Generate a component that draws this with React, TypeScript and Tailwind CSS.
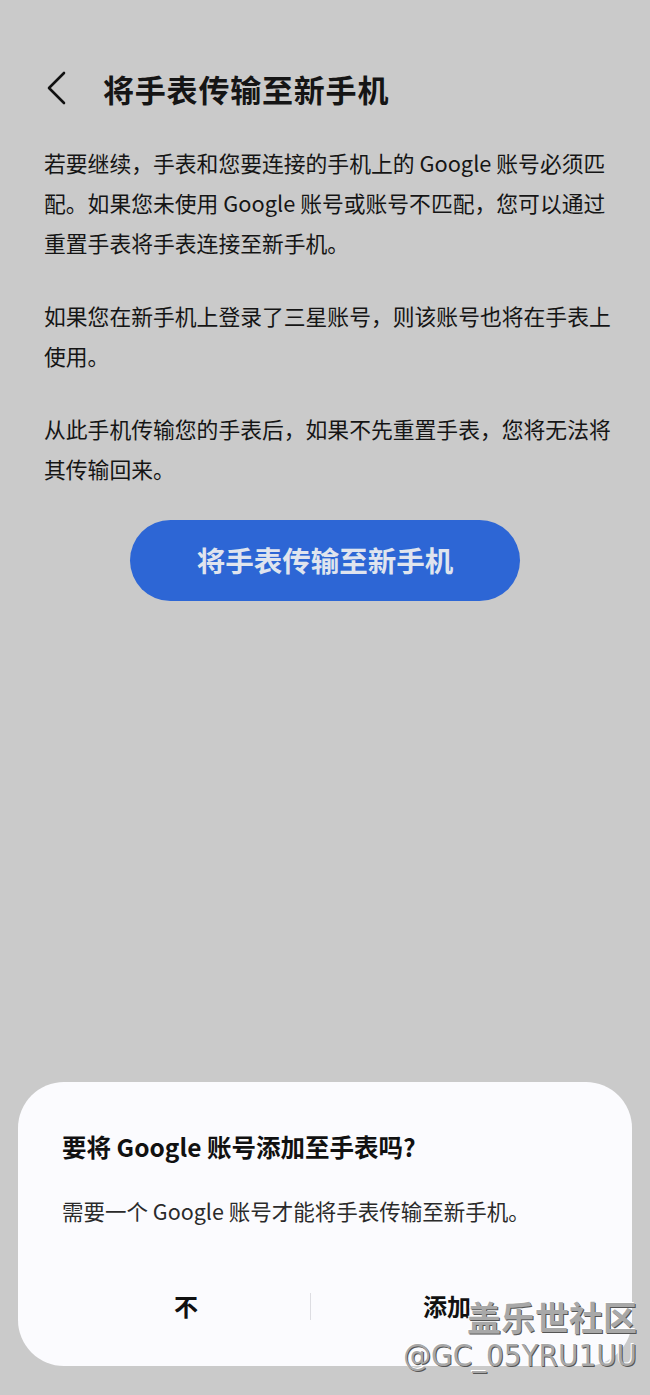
import React from "react";

const cjk = { fontFamily: '"Noto Sans CJK SC", "Noto Sans", sans-serif' };

export default function App() {
  return (
    <div
      className="relative flex min-h-[1395px] w-[650px] flex-col overflow-hidden bg-[#cacaca] text-[#151515]"
      style={cjk}
    >
      {/* Header */}
      <div className="mt-[56px] flex h-[64px] items-center">
        <svg className="ml-[44px] h-[36px] w-[24px]" viewBox="0 0 24 36" fill="none">
          <polyline points="20,3 5,18 20,33" stroke="#111" strokeWidth="2.6" strokeLinecap="round" strokeLinejoin="round" />
        </svg>
        <h1 className="ml-[35px] text-[31px] font-bold leading-none tracking-[0.8px]">将手表传输至新手机</h1>
      </div>

      {/* Body */}
      <div className="mt-[23px] flex flex-col gap-[33px] pl-[44px] text-[21.8px] leading-[40px] whitespace-nowrap">
        <p>
          若要继续，手表和您要连接的手机上的 Google 账号必须匹
          <br />
          配。如果您未使用 Google 账号或账号不匹配，您可以通过
          <br />
          重置手表将手表连接至新手机。
        </p>
        <p>
          如果您在新手机上登录了三星账号，则该账号也将在手表上
          <br />
          使用。
        </p>
        <p>
          从此手机传输您的手表后，如果不先重置手表，您将无法将
          <br />
          其传输回来。
        </p>
      </div>

      <div className="mt-[31px] flex justify-center">
        <button className="flex h-[81px] w-[390px] items-center justify-center rounded-full bg-[#2d66d5] text-[28.5px] font-bold text-[#dfe4ee]">
          将手表传输至新手机
        </button>
      </div>

      {/* Dialog */}
      <div className="mx-[18px] mt-auto mb-[29px] flex h-[284px] flex-col rounded-[46px] bg-[#fbfbfe] px-[44px] pt-[49px]">
        <div className="text-[24.5px] font-bold leading-[32px] text-[#111]">要将 Google 账号添加至手表吗?</div>
        <div className="mt-[34px] text-[21.5px] leading-[28px] text-[#2a2a2a]">需要一个 Google 账号才能将手表传输至新手机。</div>
        <div className="mt-[51px] flex h-[60px] items-center">
          <div className="flex w-[248px] justify-center text-[24px] font-bold text-[#111]">不</div>
          <div className="h-[27px] w-px bg-[#dddde2]" />
          <div className="flex w-[272px] justify-center text-[24px] font-bold text-[#111]">添加</div>
        </div>
      </div>

      {/* Watermark */}
      <div className="pointer-events-none absolute right-[13px] bottom-[24px] flex flex-col items-end leading-none">
        <span className="text-[34px] font-bold text-[#a8a8a8] [text-shadow:1px_1px_0_#555,-1px_-1px_0_#fff]">盖乐世社区</span>
        <span
          className="mt-[6px] text-[31px] text-[#a8a8a8] [text-shadow:1px_1px_0_#555,-1px_-1px_0_#fff]"
          style={{ fontFamily: '"DejaVu Sans Condensed", "Liberation Sans Narrow", sans-serif' }}
        >
          @GC_05YRU1UU
        </span>
      </div>
    </div>
  );
}
